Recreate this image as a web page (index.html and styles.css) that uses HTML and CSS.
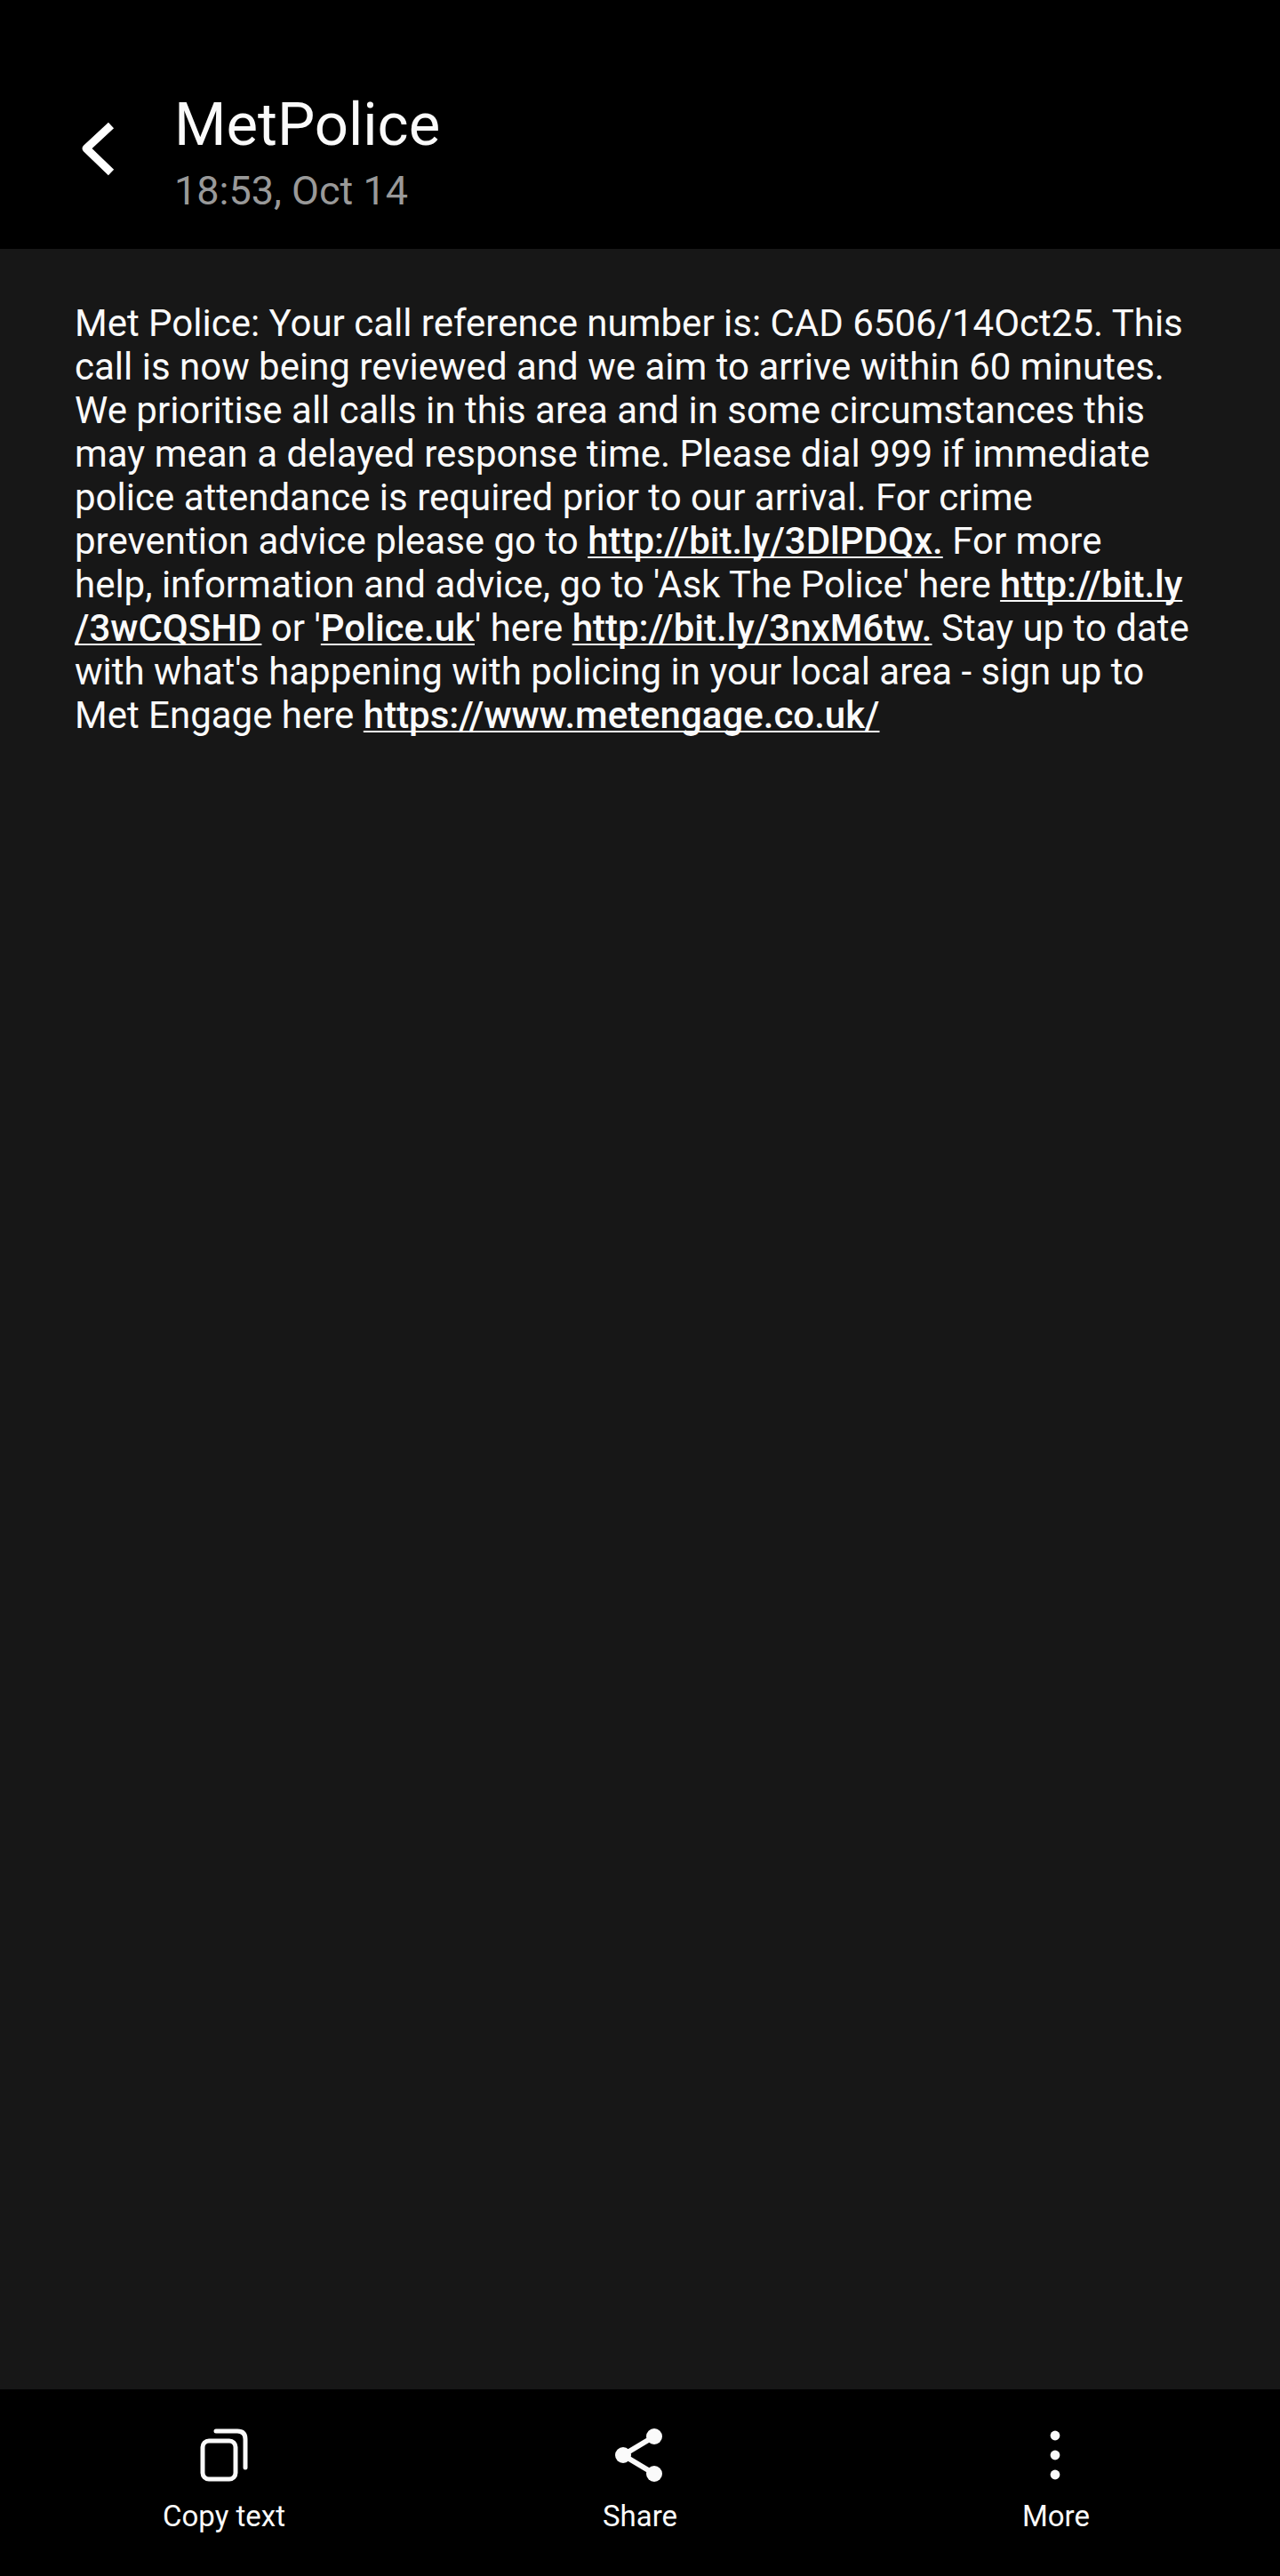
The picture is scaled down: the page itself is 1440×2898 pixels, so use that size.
FILE: index.html
```html
<!DOCTYPE html>
<html lang="en">
<head>
    <meta charset="UTF-8">
    <meta name="viewport" content="width=device-width, initial-scale=1.0">
    <title>MetPolice</title>
<link rel="stylesheet" href="styles.css">
</head>

<body>
<div class="wrapper">
  <header class="header">
    <button class="back" type="button" aria-label="Back">
      <svg viewBox="0 0 72 72"><path d="M53 5L25 31L53 58"/></svg>
    </button>
    <div>
      <h1>MetPolice</h1>
      <p class="date">18:53, Oct 14</p>
    </div>
  </header>
  <main class="message">
    <p>Met Police: Your call reference number is: CAD 6506/14Oct25. This call is now being reviewed and we aim to arrive within 60 minutes. We prioritise all calls in this area and in some circumstances this may mean a delayed response time. Please dial 999 if immediate police attendance is required prior to our arrival. For crime prevention advice please go to <a href="http://bit.ly/3DlPDQx">http://bit.ly/3DlPDQx.</a> For more <br>help, information and advice, go to 'Ask The Police' here <a href="http://bit.ly/3wCQSHD">http://bit.ly<wbr>/3wCQSHD</a> or '<a href="http://Police.uk">Police.uk</a>' here <a href="http://bit.ly/3nxM6tw">http://bit.ly/3nxM6tw.</a> Stay up to date with what's happening with policing in your local area - sign up to Met Engage here <a href="https://www.metengage.co.uk/">https://www.metengage.co.uk/</a></p>
  </main>
  <footer class="toolbar">
    <button type="button">
      <svg class="line" viewBox="0 0 72 72"><rect x="12" y="20" width="37" height="43" rx="7"/><path d="M27 9H51Q60 9 60 18V50"/></svg>
      <span>Copy text</span>
    </button>
    <button type="button">
      <svg viewBox="0 0 72 72"><path class="stem" d="M52 15L17 36L52 57"/><circle cx="52" cy="15" r="9"/><circle cx="17" cy="36" r="9"/><circle cx="52" cy="57" r="9"/></svg>
      <span>Share</span>
    </button>
    <button type="button">
      <svg viewBox="0 0 72 72"><circle cx="35" cy="14" r="5.400"/><circle cx="35" cy="36" r="5.400"/><circle cx="35" cy="58" r="5.400"/></svg>
      <span>More</span>
    </button>
  </footer>
</div>
</body>
</html>
```
FILE: styles.css
```css
*{
	padding:0;
	margin:0;
	box-sizing:border-box;
	}
body{
	background:#000;
	color:#fafafa;
	font-family:Roboto,"Liberation Sans",sans-serif;
	}
button{
	background:none;
	border:0;
	color:inherit;
	font-family:inherit;
	cursor:pointer;
	}
svg{
	display:block;
	width:72px;
	height:72px;
	fill:#fafafa;
	}
.wrapper{
	display:flex;
	flex-direction:column;
	min-height:100vh;
	}
.header{
	display:flex;
	align-items:center;
	gap:52px;
	padding:100px 72px 37px;
	}
.back path{
	fill:none;
	stroke:#fff;
	stroke-width:9;
	stroke-linejoin:round;
	}
h1{
	font-size:67px;
	line-height:80px;
	font-weight:400;
	}
.date{
	margin-top:7px;
	font-size:45px;
	line-height:56px;
	color:#999;
	}
.message{
	flex:1;
	padding:59px 84px;
	background:#171717;
	font-size:42px;
	line-height:49px;
	}
.message a{
	color:inherit;
	font-weight:500;
	text-decoration:underline;
	text-decoration-thickness:2px;
	text-decoration-skip-ink:none;
	text-underline-offset:3px;
	}
.toolbar{
	display:flex;
	padding:0 18px;
	}
.toolbar button{
	flex:1;
	display:flex;
	flex-direction:column;
	align-items:center;
	gap:13px;
	padding:38px 0 47px;
	font-size:33px;
	line-height:40px;
	}
.line{
	fill:none;
	stroke:#fafafa;
	stroke-width:5;
	stroke-linecap:round;
	}
.stem{
	fill:none;
	stroke:#fafafa;
	stroke-width:6;
	}
```
